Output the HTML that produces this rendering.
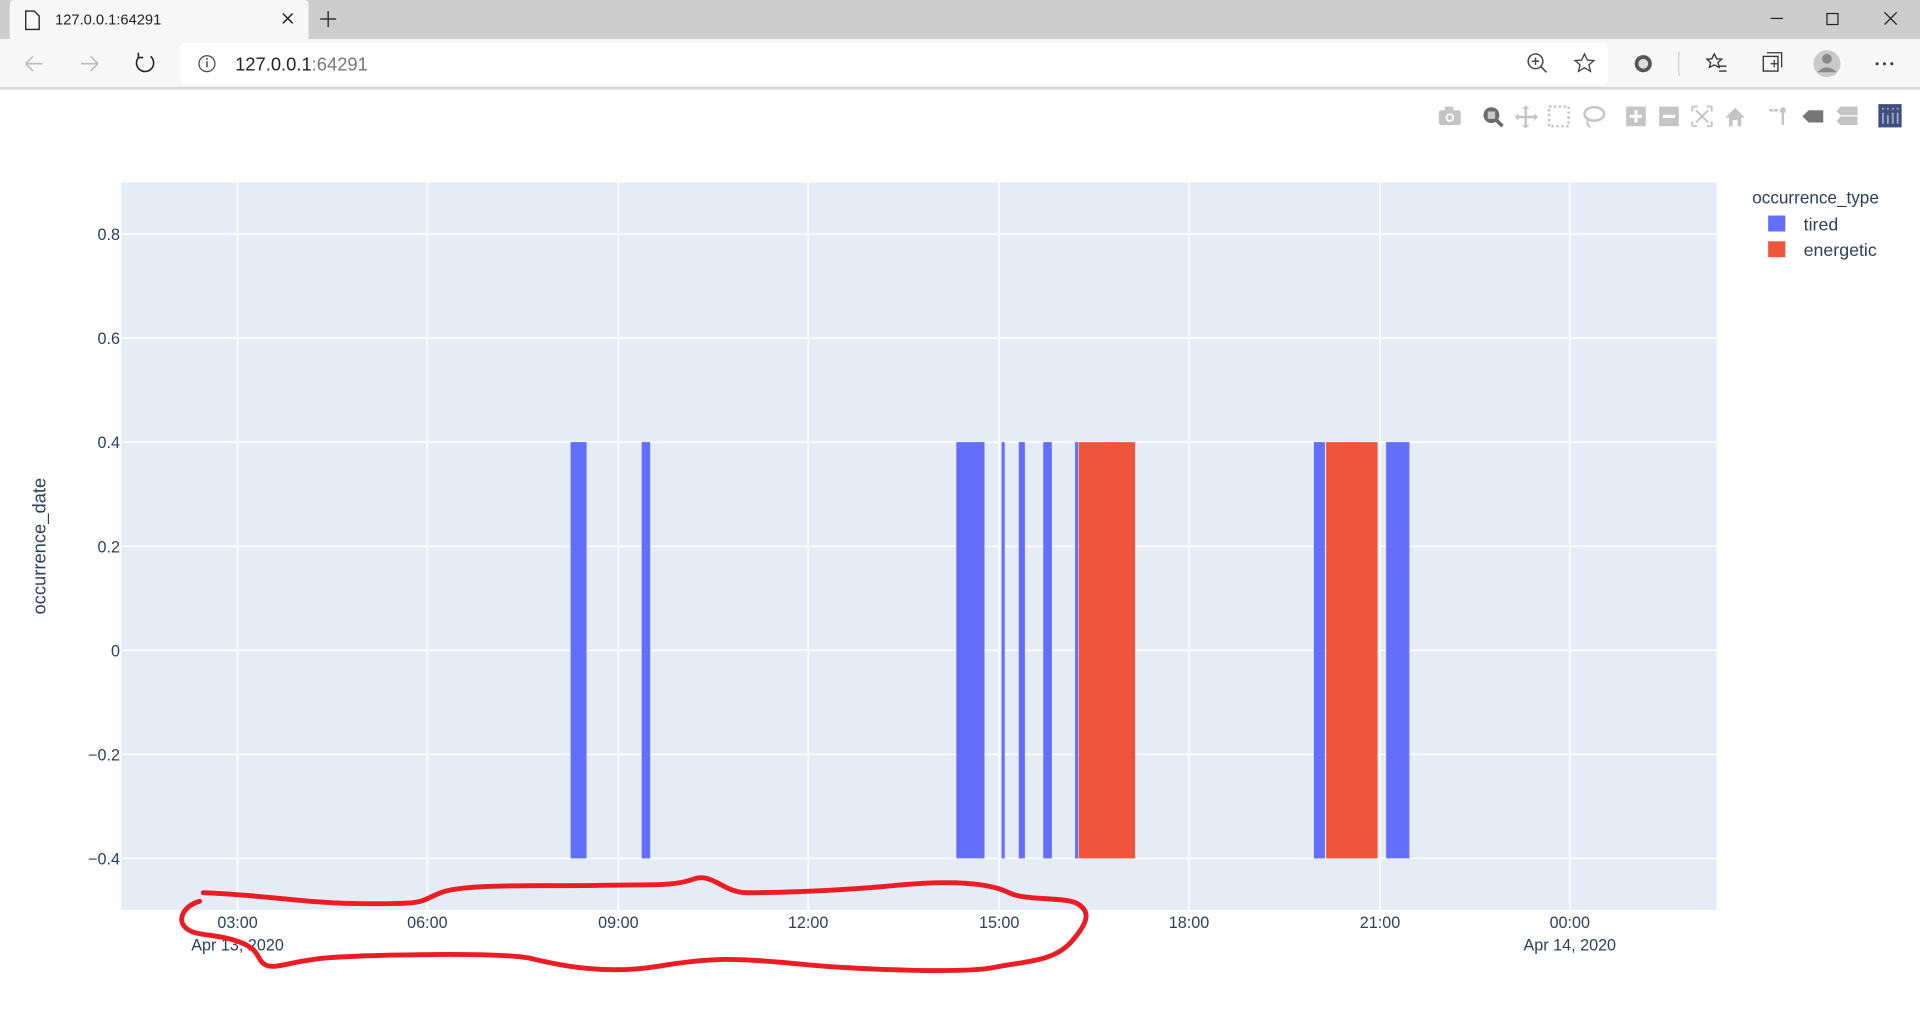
<!DOCTYPE html>
<html><head><meta charset="utf-8"><style>
html,body{margin:0;padding:0;background:#fff;overflow:hidden}
svg{display:block}
text{font-family:"Liberation Sans",sans-serif}
</style></head><body>
<svg width="1920" height="1025" viewBox="0 0 1568 837" xmlns="http://www.w3.org/2000/svg">
<rect x="0" y="0" width="1568" height="32" fill="#cdcdcd"/>
<path d="M8 32 V4 Q8 0 12 0 H248 Q252 0 252 4 V32 Z" fill="#f7f7f7"/>
<path d="M21 9 h7 l4 4 v11 h-11 z" fill="none" stroke="#222" stroke-width="1.1"/>
<text x="45" y="20" font-size="12" fill="#222">127.0.0.1:64291</text>
<path d="M231 11 l8 8 M239 11 l-8 8" stroke="#222" stroke-width="1.2"/>
<path d="M268 9 v13 M261.5 15.5 h13" stroke="#333" stroke-width="1.2"/>
<path d="M1446 15 h10" stroke="#222" stroke-width="1"/>
<rect x="1492" y="11" width="9" height="9" fill="none" stroke="#222"/>
<path d="M1539 10 l10 10 M1549 10 l-10 10" stroke="#222" stroke-width="1.1"/>
<rect x="0" y="32" width="1568" height="40" fill="#f7f7f7"/>
<rect x="0" y="71" width="1568" height="2" fill="#d6d6d6"/>
<path d="M21 52 h14 M21 52 l6 -6 M21 52 l6 6" stroke="#bbb" stroke-width="1.3" fill="none"/>
<path d="M80 52 h-14 M80 52 l-6 -6 M80 52 l-6 6" stroke="#bbb" stroke-width="1.3" fill="none"/>
<path d="M123 46 A7 7 0 1 1 113 47 M113 43 v4 h4" stroke="#222" stroke-width="1.3" fill="none"/>
<rect x="147" y="35" width="1166" height="34" rx="4" fill="#fff"/>
<circle cx="169" cy="52" r="6.5" fill="none" stroke="#444" stroke-width="1"/>
<path d="M169 50 v5" stroke="#444" stroke-width="1.2"/><circle cx="169" cy="48" r="0.8" fill="#444"/>
<text x="192" y="57.5" font-size="15" fill="#222">127.0.0.1<tspan fill="#767676">:64291</tspan></text>
<circle cx="1254" cy="50" r="6" fill="none" stroke="#444" stroke-width="1.2"/>
<path d="M1258 54 l5 5 M1251 50 h6 M1254 47 v6" stroke="#444" stroke-width="1.2"/>
<path d="M1294 44 l2.3 5 5.4 .4 -4.1 3.5 1.3 5.3 -4.9 -2.9 -4.9 2.9 1.3 -5.3 -4.1 -3.5 5.4 -.4z" fill="none" stroke="#444" stroke-width="1.1"/>
<circle cx="1342" cy="52" r="7" fill="#555"/><circle cx="1342" cy="52" r="4" fill="#ddd"/>
<path d="M1371 42 v20" stroke="#ccc"/>
<path d="M1400 44 l2 4 4 .3 -3 2.7 1 4 -4 -2 -4 2 1 -4 -3 -2.7 4 -.3z M1404 54 h6 M1404 58 h6" fill="none" stroke="#333" stroke-width="1.1"/>
<rect x="1440" y="46" width="12" height="12" fill="none" stroke="#333" stroke-width="1.1"/><path d="M1443 43 h12 v12" fill="none" stroke="#333"/><path d="M1446 52 h6 M1449 49 v6" stroke="#333"/>
<circle cx="1492" cy="52" r="11" fill="#c9c9c9"/><circle cx="1492" cy="48" r="4" fill="#888"/><path d="M1484 59 q8 -8 16 0" fill="#888"/>
<circle cx="1533" cy="52" r="1.2" fill="#333"/><circle cx="1539" cy="52" r="1.2" fill="#333"/><circle cx="1545" cy="52" r="1.2" fill="#333"/>
<g fill="#c4c4c4">
<rect x="1175" y="90" width="18" height="12" rx="2"/><rect x="1180" y="87" width="7" height="4"/><circle cx="1184" cy="96" r="3.5" fill="#fff"/><circle cx="1184" cy="96" r="2" />
<circle cx="1218" cy="94" r="6.5" fill="#6b6b6b"/><rect x="1215" y="91" width="6" height="6" fill="#c9c9c9"/><path d="M1222 98 l5 5" stroke="#6b6b6b" stroke-width="3"/>
<path d="M1246 87 v17 M1238 95.5 h17" stroke="#c4c4c4" stroke-width="2"/><path d="M1246 86 l-3 3 h6z M1246 105 l-3 -3 h6z M1237 95.5 l3 -3 v6z M1256 95.5 l-3 -3 v6z"/>
<rect x="1265" y="87" width="16" height="16" fill="none" stroke="#c4c4c4" stroke-width="2" stroke-dasharray="2 2"/>
<ellipse cx="1302" cy="93" rx="8" ry="5.5" fill="none" stroke="#c4c4c4" stroke-width="2"/><path d="M1297 97 q-2 5 2 7" fill="none" stroke="#c4c4c4" stroke-width="1.5"/>
<rect x="1328" y="87" width="16" height="16"/><path d="M1336 90 v10 M1331 95 h10" stroke="#fff" stroke-width="2.5"/>
<rect x="1355" y="87" width="16" height="16"/><path d="M1358 95 h10" stroke="#fff" stroke-width="2.5"/>
<path d="M1382 87 h4 M1382 87 v4 M1398 87 h-4 M1398 87 v4 M1382 103 h4 M1382 103 v-4 M1398 103 h-4 M1398 103 v-4 M1385 90 l10 10 M1395 90 l-10 10" stroke="#c4c4c4" stroke-width="1.5"/>
<path d="M1409 96 l8 -8 8 8 h-3 v7 h-3 v-5 h-4 v5 h-3 v-7z"/>
<circle cx="1456" cy="90" r="2.5"/><rect x="1455" y="92" width="2" height="10"/><rect x="1445" y="89" width="3" height="2"/><rect x="1449" y="89" width="3" height="2"/>
<path d="M1472 95 l5 -5 h12 v10 h-12z" fill="#777"/>
<path d="M1500 91 l3 -4 h14 v7 h-14z M1500 99 l3 -4 h14 v7 h-14z" fill="#c4c4c4"/>
<rect x="1534" y="85" width="19" height="19" fill="#3f4f75"/>
</g>
<g fill="#9ad" ><rect x="1537" y="88" width="1.5" height="1.5"/><rect x="1541" y="88" width="1.5" height="1.5"/><rect x="1545" y="88" width="1.5" height="1.5"/><rect x="1549" y="88" width="1.5" height="1.5"/>
<rect x="1537" y="92" width="1.5" height="9"/><rect x="1541" y="94" width="1.5" height="7"/><rect x="1545" y="92" width="1.5" height="9"/><rect x="1549" y="92" width="1.5" height="9"/></g>
<rect x="99" y="149" width="1303" height="594" fill="#e5ecf6"/>
<g stroke="#fff" stroke-width="1.2">
<path d="M194 149 V743 M349 149 V743 M505 149 V743 M660 149 V743 M816 149 V743 M971 149 V743 M1127 149 V743 M1282 149 V743"/>
<path d="M99 191 H1402 M99 276 H1402 M99 361 H1402 M99 446 H1402 M99 531 H1402 M99 616 H1402 M99 701 H1402"/>
</g>
<g fill="#636efa">
<rect x="466" y="361" width="13" height="340"/><rect x="524" y="361" width="7" height="340"/>
<rect x="781" y="361" width="23" height="340"/><rect x="818" y="361" width="2.5" height="340"/>
<rect x="832" y="361" width="5" height="340"/><rect x="852" y="361" width="7" height="340"/>
<rect x="878" y="361" width="2.5" height="340"/><rect x="1073" y="361" width="9" height="340"/>
<rect x="1132" y="361" width="19" height="340"/>
</g>
<g fill="#ef553b"><rect x="881" y="361" width="46" height="340"/><rect x="1083" y="361" width="42" height="340"/></g>
<g font-size="13.2" fill="#2a3f5f" text-anchor="end">
<text x="98" y="196">0.8</text><text x="98" y="281">0.6</text><text x="98" y="366">0.4</text><text x="98" y="451">0.2</text><text x="98" y="536">0</text><text x="98" y="621">−0.2</text><text x="98" y="706">−0.4</text>
</g>
<g font-size="13.2" fill="#2a3f5f" text-anchor="middle">
<text x="194" y="758">03:00</text><text x="194" y="776">Apr 13, 2020</text><text x="349" y="758">06:00</text><text x="505" y="758">09:00</text><text x="660" y="758">12:00</text><text x="816" y="758">15:00</text><text x="971" y="758">18:00</text><text x="1127" y="758">21:00</text><text x="1282" y="758">00:00</text><text x="1282" y="776">Apr 14, 2020</text>
</g>
<text transform="translate(37 446) rotate(-90)" font-size="15" fill="#2a3f5f" text-anchor="middle">occurrence_date</text>
<text x="1431" y="166" font-size="14" fill="#2a3f5f">occurrence_type</text>
<rect x="1444" y="176" width="14" height="13" fill="#636efa"/><text x="1473" y="188" font-size="14.5" fill="#2a3f5f">tired</text>
<rect x="1444" y="197" width="14" height="13" fill="#ef553b"/><text x="1473" y="209" font-size="14.5" fill="#2a3f5f">energetic</text>
<path d="M166 729 C220 731 250 738 300 738 S340 737 360 729 S450 724 490 723 S550 724 566 718 S590 729 610 729 S680 728 732 723 S810 722 824 729 S870 732 880 738 S890 752 875 769 S835 785 812 790 S700 792 650 787 S580 782 538 789 S460 789 435 783 S300 780 270 782 S225 792 217 788 S214 776 195 769 S160 765 152 758 S150 740 163 736" fill="none" stroke="#ec1c24" stroke-width="4" stroke-linejoin="round" stroke-linecap="round"/>
</svg>
</body></html>
